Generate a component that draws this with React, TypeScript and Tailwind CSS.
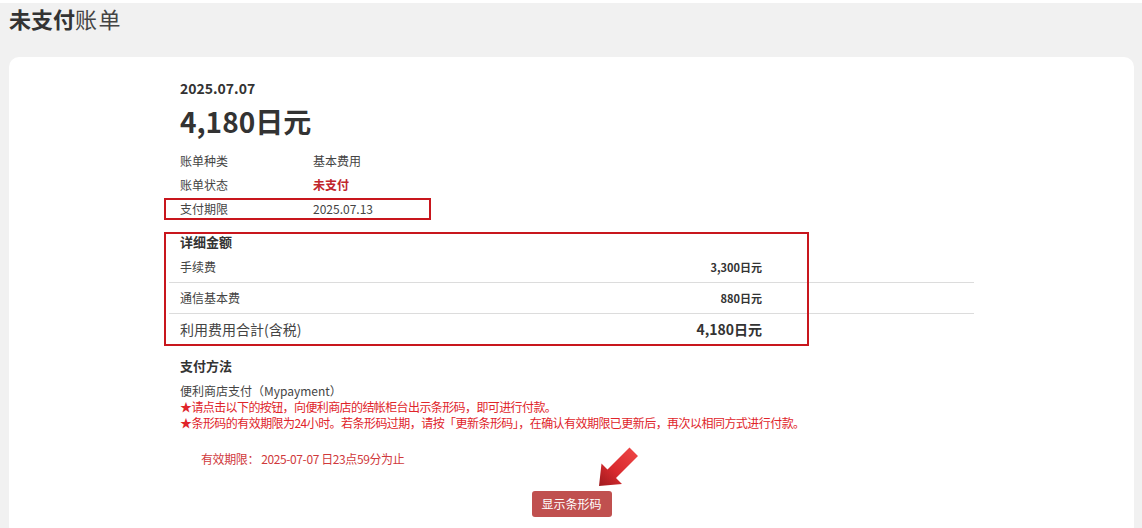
const font = { fontFamily: '"Noto Sans CJK SC", "Noto Sans", sans-serif' };

function InfoRow({ label, value, valueClass = "" }: { label: string; value: string; valueClass?: string }) {
  return (
    <div className="flex h-[24px] items-center text-[12px] text-[#444]">
      <span className="w-[133px]">{label}</span>
      <span className={valueClass}>{value}</span>
    </div>
  );
}

function FeeRow({
  label,
  value,
  last = false,
  total = false,
}: {
  label: string;
  value: string;
  last?: boolean;
  total?: boolean;
}) {
  return (
    <div className={`flex h-[31px] w-[805px] items-center ${last ? "" : "border-b border-[#dcdcdc]"}`}>
      <div className="flex w-[593px] items-center justify-between pl-[11px]">
        <span className={total ? "text-[14px] text-[#444]" : "text-[12px] text-[#444]"}>{label}</span>
        <span className={total ? "text-[14px] font-bold text-[#333]" : "text-[11px] font-bold text-[#333]"}>
          {value}
        </span>
      </div>
    </div>
  );
}

export default function App() {
  return (
    <div className="min-h-[528px] bg-[#f1f1f1]" style={font}>
      <div className="h-[3px] bg-white" />
      <h1 className="h-[30px] pl-[9px] text-[22px] leading-[30px] text-[#333]">
        <span className="font-bold">未支付</span>
        <span className="font-normal tracking-[1.5px] text-[#444]">账单</span>
      </h1>
      <div className="mt-[24px] mr-[8px] ml-[9px] h-[480px] rounded-[10px] bg-white pt-[21px] pl-[160px]">
        <div className="w-[805px]">
          <div className="pl-[11px]">
            <div className="h-[20px] text-[14px] font-bold leading-[20px] text-[#333]">2025.07.07</div>
            <div className="mt-[3px] h-[40px] text-[28px] font-bold leading-[40px] text-[#333]">4,180日元</div>
            <div className="mt-[8px]">
              <InfoRow label="账单种类" value="基本费用" />
              <InfoRow label="账单状态" value="未支付" valueClass="font-bold text-[#c0262c]" />
              <div className="relative">
                <InfoRow label="支付期限" value="2025.07.13" />
                <div className="absolute top-[1px] left-[-16px] h-[22px] w-[267px] border-2 border-[#c8161d]" />
              </div>
            </div>
          </div>

          <div className="relative mt-[11px]">
            <div className="h-[20px] pl-[11px] text-[13px] font-bold leading-[20px] text-[#333]">详细金额</div>
            <FeeRow label="手续费" value="3,300日元" />
            <FeeRow label="通信基本费" value="880日元" />
            <FeeRow label="利用费用合計(含税)" value="4,180日元" last total />
            <div className="absolute top-0 left-[-5px] h-[114px] w-[645px] border-2 border-[#c8161d]" />
          </div>

          <div className="mt-[11px] pl-[11px]">
            <div className="h-[20px] text-[13px] font-bold leading-[20px] text-[#333]">支付方法</div>
            <div className="mt-[7px] text-[12px] leading-[16px]">
              <div className="text-[#444]">便利商店支付（Mypayment）</div>
              <div className="tracking-[-0.6px] text-[#e0242a]">
                ★请点击以下的按钮，向便利商店的结帐柜台出示条形码，即可进行付款。
              </div>
              <div className="tracking-[-0.55px] text-[#e0242a]">
                ★条形码的有效期限为24小时。若条形码过期，请按「更新条形码」，在确认有效期限已更新后，再次以相同方式进行付款。
              </div>
            </div>
            <div className="mt-[20px] pl-[21px] text-[12px] leading-[16px] tracking-[-0.4px] text-[#d0393c]">
              有效期限： 2025-07-07 日23点59分为止
            </div>
          </div>

          <div className="relative mt-[24px] flex justify-center">
            <button className="h-[26px] w-[80px] rounded-[3px] bg-[#c0504f] text-[12px] text-white">显示条形码</button>
            <svg className="absolute top-[-50px] left-[427px]" width="44" height="48" viewBox="0 0 44 48">
              <defs>
                <linearGradient id="arr" x1="1" y1="0" x2="0" y2="1">
                  <stop offset="0" stopColor="#f04848" />
                  <stop offset="0.6" stopColor="#d82a2e" />
                  <stop offset="1" stopColor="#9e1a1e" />
                </linearGradient>
              </defs>
              <polygon
                points="3,45 26,43 20,37 42,15 33.5,6.5 11.5,28.5 5.5,22.5"
                fill="url(#arr)"
              />
            </svg>
          </div>
        </div>
      </div>
    </div>
  );
}
